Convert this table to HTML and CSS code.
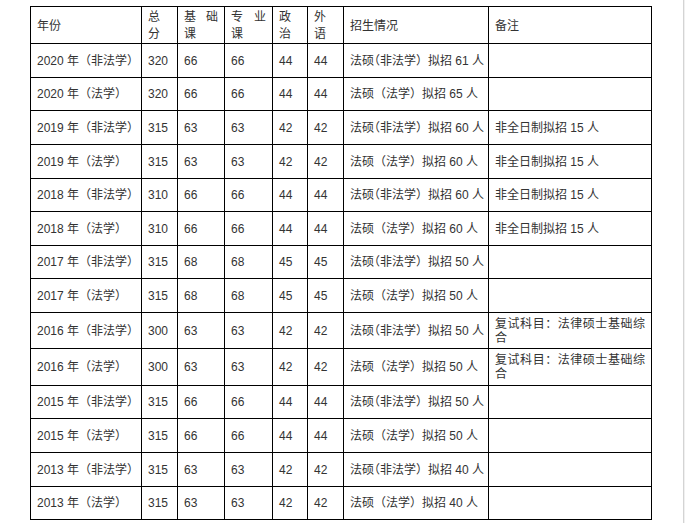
FILE: index.html
```html
<!DOCTYPE html>
<html lang="zh-CN">
<head>
<meta charset="utf-8">
<title>分数线</title>
<link rel="stylesheet" href="styles.css">
</head>
<body>
<div class="page">
<main class="main">
<table class="score">
<colgroup>
<col class="c-year"><col class="c-total"><col class="c-base"><col class="c-major"><col class="c-pol"><col class="c-lang"><col class="c-plan"><col class="c-note">
</colgroup>
<thead>
<tr class="head">
<td>年份</td><td>总分</td><td>基础课</td><td>专业课</td><td>政治</td><td>外语</td><td>招生情况</td><td>备注</td>
</tr>
</thead>
<tbody>
<tr class="h34"><td class="nw">2020 年（非法学）</td><td>320</td><td>66</td><td>66</td><td>44</td><td>44</td><td class="nw">法硕<span class="halt">（</span>非法学）拟招 61 人</td><td></td></tr>
<tr class="h33"><td class="nw">2020 年（法学）</td><td>320</td><td>66</td><td>66</td><td>44</td><td>44</td><td class="nw">法硕（法学）拟招 65 人</td><td></td></tr>
<tr class="h34"><td class="nw">2019 年（非法学）</td><td>315</td><td>63</td><td>63</td><td>42</td><td>42</td><td class="nw">法硕<span class="halt">（</span>非法学）拟招 60 人</td><td class="nw">非全日制拟招 15 人</td></tr>
<tr class="h34"><td class="nw">2019 年（法学）</td><td>315</td><td>63</td><td>63</td><td>42</td><td>42</td><td class="nw">法硕（法学）拟招 60 人</td><td class="nw">非全日制拟招 15 人</td></tr>
<tr class="h33"><td class="nw">2018 年（非法学）</td><td>310</td><td>66</td><td>66</td><td>44</td><td>44</td><td class="nw">法硕<span class="halt">（</span>非法学）拟招 60 人</td><td class="nw">非全日制拟招 15 人</td></tr>
<tr class="h34"><td class="nw">2018 年（法学）</td><td>310</td><td>66</td><td>66</td><td>44</td><td>44</td><td class="nw">法硕（法学）拟招 60 人</td><td class="nw">非全日制拟招 15 人</td></tr>
<tr class="h33"><td class="nw">2017 年（非法学）</td><td>315</td><td>68</td><td>68</td><td>45</td><td>45</td><td class="nw">法硕<span class="halt">（</span>非法学）拟招 50 人</td><td></td></tr>
<tr class="h34"><td class="nw">2017 年（法学）</td><td>315</td><td>68</td><td>68</td><td>45</td><td>45</td><td class="nw">法硕（法学）拟招 50 人</td><td></td></tr>
<tr class="h36"><td class="nw">2016 年（非法学）</td><td>300</td><td>63</td><td>63</td><td>42</td><td>42</td><td class="nw">法硕<span class="halt">（</span>非法学）拟招 50 人</td><td class="note">复试科目：法律硕士基础综合</td></tr>
<tr class="h37"><td class="nw">2016 年（法学）</td><td>300</td><td>63</td><td>63</td><td>42</td><td>42</td><td class="nw">法硕（法学）拟招 50 人</td><td class="note">复试科目：法律硕士基础综合</td></tr>
<tr class="h33"><td class="nw">2015 年（非法学）</td><td>315</td><td>66</td><td>66</td><td>44</td><td>44</td><td class="nw">法硕<span class="halt">（</span>非法学）拟招 50 人</td><td></td></tr>
<tr class="h34"><td class="nw">2015 年（法学）</td><td>315</td><td>66</td><td>66</td><td>44</td><td>44</td><td class="nw">法硕（法学）拟招 50 人</td><td></td></tr>
<tr class="h34"><td class="nw">2013 年（非法学）</td><td>315</td><td>63</td><td>63</td><td>42</td><td>42</td><td class="nw">法硕<span class="halt">（</span>非法学）拟招 40 人</td><td></td></tr>
<tr class="h33"><td class="nw">2013 年（法学）</td><td>315</td><td>63</td><td>63</td><td>42</td><td>42</td><td class="nw">法硕（法学）拟招 40 人</td><td></td></tr>
</tbody>
</table>
</main>
<aside class="edge"></aside>
</div>
</body>
</html>
```
FILE: styles.css
```css
html, body {
  margin: 0;
  padding: 0;
  background: #ffffff;
}
.page {
  display: flex;
  width: 685px;
  height: 523px;
  overflow: hidden;
}
.main {
  flex: 1;
  padding: 6px 0 0 30px;
}
.edge {
  width: 2px;
  height: 523px;
  background: #f0f0f0;
  border-left: 1px solid #d4d4d4;
  box-sizing: border-box;
}
.score {
  border-collapse: collapse;
  table-layout: fixed;
  width: 621px;
  font-family: "Liberation Sans", "Noto Sans CJK SC", sans-serif;
  font-size: 12px;
  color: #333;
}
.c-year { width: 111px; }
.c-total { width: 36px; }
.c-base { width: 47px; }
.c-major { width: 48px; }
.c-pol { width: 35px; }
.c-lang { width: 36px; }
.c-plan { width: 145px; }
.c-note { width: 163px; }
.score td {
  border: 1px solid #000;
  padding: 0 6px;
  line-height: 14px;
  box-sizing: border-box;
  vertical-align: middle;
  text-align: justify;
  word-break: break-all;
}
.score .head td {
  height: 37px;
  line-height: 17px;
  padding-top: 2px;
  padding-bottom: 0;
}
.score .h33 td { height: 33px; }
.score .h34 td { height: 34px; }
.score .h36 td { height: 36px; }
.score .h37 td { height: 37px; }
.score td.nw {
  white-space: nowrap;
  text-align: left;
}
.score td.note {
  line-height: 14px;
}
.halt {
  font-feature-settings: "halt";
}
```
